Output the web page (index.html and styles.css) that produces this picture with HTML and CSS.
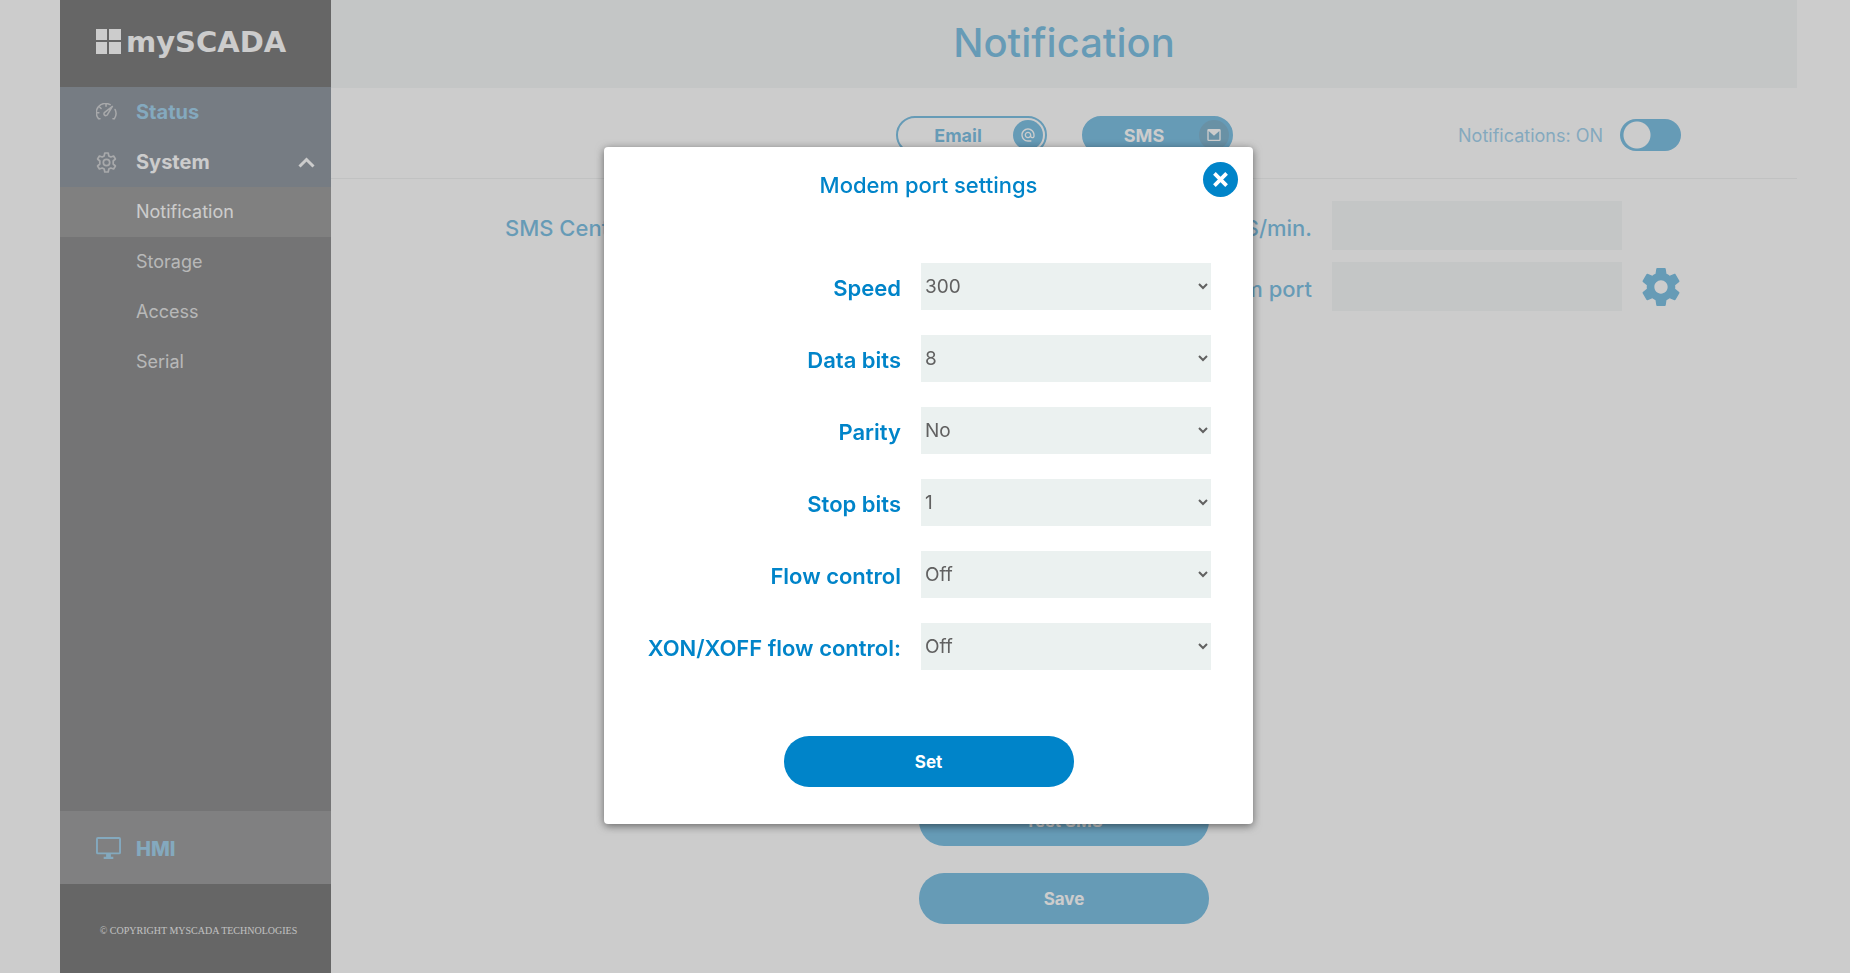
FILE: index.html
```html
<!DOCTYPE html>
<html lang="en">
<head>
  <meta charset="UTF-8">
  <title>mySCADA - Notification</title>
  <link rel="stylesheet" href="styles.css">
</head>
<body>

  <div class="page">

    <!-- Sidebar -->
    <aside class="sidebar">
      <a class="logo" href="#">
        <svg class="logo-mark" viewBox="0 0 25 25"><path d="M0 0h11v11H0zM13 0h12v11H13zM0 13h11v12H0zM13 13h12v12H13z"/></svg>
        <span>mySCADA</span>
      </a>

      <nav class="menu">
        <a class="menu-item status" href="#">
          <svg class="menu-icon line" viewBox="0 0 22 18" stroke-width="1.6" stroke-linecap="round">
            <path d="M4.200 16.400H2.700A9.600 9.600 0 0 1 14.800 1.800M17.800 16.400h1.500A9.600 9.600 0 0 0 20 6.800M10.500 1.400v2M4 4.400l1.300 1.300M1.400 10.200h1.600"/>
            <path d="M17.200 3.600l-8.100 6.200a1.900 1.900 0 1 0 2.700 2.600z" stroke-linejoin="round"/>
          </svg>
          <span>Status</span>
        </a>
        <a class="menu-item system" href="#">
          <svg class="menu-icon line" viewBox="0 0 21 21" stroke-width="1.7" stroke-linejoin="round">
            <path d="M8.800 1h3.400l.6 2.900 2 1.100 2.800-1 1.800 3-2.200 2v3l2.200 2-1.800 3-2.800-1-2 1.100-.6 2.900H8.800l-.6-2.900-2-1.100-2.800 1-1.800-3 2.200-2V9L1.600 7l1.800-3 2.800 1 2-1.100z"/>
            <circle cx="10.500" cy="10.500" r="3.200"/>
          </svg>
          <span>System</span>
          <svg class="chevron line" viewBox="0 0 17 11" stroke-width="3"><path d="M1.500 9.500l7-7 7 7"/></svg>
        </a>
        <a class="submenu-item active" href="#">Notification</a>
        <a class="submenu-item" href="#">Storage</a>
        <a class="submenu-item" href="#">Access</a>
        <a class="submenu-item" href="#">Serial</a>
      </nav>

      <a class="hmi" href="#">
        <svg class="hmi-icon" viewBox="0 0 26 24"><path fill-rule="evenodd" d="M2 0h22a2 2 0 0 1 2 2v14a2 2 0 0 1-2 2h-8.500v2.500H18V23H8v-2.500h2.500V18H2a2 2 0 0 1-2-2V2a2 2 0 0 1 2-2zm0 2v14h22V2z"/></svg>
        <span>HMI</span>
      </a>
      <footer class="copyright">© COPYRIGHT MYSCADA TECHNOLOGIES</footer>
    </aside>

    <!-- Content -->
    <main class="content">
      <header class="header">
        <h1>Notification</h1>
      </header>

      <div class="toolbar">
        <div class="tabs">
          <button class="tab" type="button">
            <span class="tab-text">Email</span>
            <span class="tab-icon">
              <svg viewBox="0 0 24 24"><path d="M12 2C6.480 2 2 6.480 2 12s4.480 10 10 10h5v-2h-5c-4.340 0-8-3.660-8-8s3.660-8 8-8 8 3.660 8 8v1.430c0 .79-.71 1.570-1.500 1.570s-1.500-.78-1.500-1.570V12c0-2.760-2.240-5-5-5s-5 2.240-5 5 2.240 5 5 5c1.380 0 2.640-.56 3.540-1.470.65.89 1.770 1.470 2.960 1.470 1.970 0 3.500-1.600 3.500-3.570V12c0-5.520-4.480-10-10-10zm0 13c-1.660 0-3-1.340-3-3s1.340-3 3-3 3 1.340 3 3-1.340 3-3 3z"/></svg>
            </span>
          </button>
          <button class="tab selected" type="button">
            <span class="tab-text">SMS</span>
            <span class="tab-icon">
              <svg viewBox="0 0 24 24"><path fill-rule="evenodd" d="M4 3h16a2 2 0 0 1 2 2v14a2 2 0 0 1-2 2H4a2 2 0 0 1-2-2V5a2 2 0 0 1 2-2zm0 3v13h16V6l-8 7z"/></svg>
            </span>
          </button>
        </div>
        <label class="toggle">
          <span>Notifications: ON</span>
          <input type="checkbox" checked>
        </label>
      </div>

      <form class="settings">
        <div class="settings-row">
          <div class="field">
            <label for="center">SMS Center number</label>
            <input id="center" type="text">
          </div>
          <div class="field">
            <label for="rate">SMS/min.</label>
            <input id="rate" type="text">
            <span class="field-end"></span>
          </div>
        </div>
        <div class="settings-row last">
          <div class="field">
            <label for="port">Modem port</label>
            <input id="port" type="text">
            <button class="field-end" type="button" aria-label="Modem port settings">
              <svg viewBox="2 2 20 20"><path d="M19.430 12.980c.04-.32.07-.64.07-.98s-.03-.66-.07-.98l2.110-1.650c.19-.15.24-.42.12-.64l-2-3.460c-.12-.22-.39-.3-.61-.22l-2.490 1c-.52-.4-1.080-.73-1.690-.98l-.38-2.650C14.460 2.180 14.250 2 14 2h-4c-.25 0-.46.18-.49.42l-.38 2.650c-.61.25-1.170.59-1.690.98l-2.490-1c-.23-.09-.49 0-.61.22l-2 3.460c-.13.22-.07.49.12.64l2.110 1.650c-.04.32-.07.65-.07.98s.03.66.07.98l-2.110 1.650c-.19.15-.24.42-.12.64l2 3.460c.12.22.39.3.61.22l2.490-1c.52.4 1.080.73 1.690.98l.38 2.650c.03.24.24.42.49.42h4c.25 0 .46-.18.49-.42l.38-2.650c.61-.25 1.170-.59 1.690-.98l2.490 1c.23.09.49 0 .61-.22l2-3.460c.12-.22.07-.49-.12-.64l-2.110-1.650zM12 15.500c-1.930 0-3.500-1.570-3.500-3.500s1.570-3.500 3.500-3.500 3.500 1.570 3.500 3.500-1.570 3.500-3.500 3.500z"/></svg>
            </button>
          </div>
        </div>
        <div class="actions">
          <button class="button" type="button">Test SMS</button>
          <button class="button" type="submit">Save</button>
        </div>
      </form>
    </main>

  </div>

  <!-- Modem port dialog -->
  <div class="overlay">
    <form class="modal" role="dialog" aria-labelledby="modal-title">
      <button class="close" type="button" aria-label="Close">
        <svg class="line" viewBox="0 0 16 16" stroke-width="4"><path d="M1.500 1.500l13 13M14.500 1.500l-13 13"/></svg>
      </button>
      <h2 id="modal-title">Modem port settings</h2>
      <div class="modal-fields">
        <label for="speed">Speed</label>
        <select id="speed"><option>300</option><option>9600</option></select>
        <label for="databits">Data bits</label>
        <select id="databits"><option>8</option><option>7</option></select>
        <label for="parity">Parity</label>
        <select id="parity"><option>No</option><option>Even</option><option>Odd</option></select>
        <label for="stopbits">Stop bits</label>
        <select id="stopbits"><option>1</option><option>2</option></select>
        <label for="flow">Flow control</label>
        <select id="flow"><option>Off</option><option>On</option></select>
        <label for="xon">XON/XOFF flow control:</label>
        <select id="xon"><option>Off</option><option>On</option></select>
      </div>
      <button class="button" type="submit">Set</button>
    </form>
  </div>

</body>
</html>
```
FILE: styles.css
```css
* {
  box-sizing: border-box;
}

body {
  margin: 0;
  background: #fff;
  color: #0084c9;
  font-family: Inter, "Open Sans", sans-serif;
}

h1, h2 {
  margin: 0;
  font-weight: 500;
}

a {
  color: inherit;
  text-decoration: none;
}

button, input, select {
  border: none;
  border-radius: 0;
  padding: 0;
  font-family: inherit;
}

svg {
  display: block;
  fill: currentColor;
}

svg.line {
  fill: none;
  stroke: currentColor;
}

.page {
  display: flex;
  min-height: 100vh;
  padding: 0 53px 0 60px;
}

/* Sidebar */
.sidebar {
  display: flex;
  flex-direction: column;
  flex: 0 0 271px;
  background: #232527;
}

.logo {
  display: flex;
  align-items: center;
  gap: 5px;
  height: 87px;
  padding: 0 0 4px 36px;
  background: #000;
  color: #fff;
  font: bold 29px "DejaVu Sans", sans-serif;
}

.logo-mark {
  width: 25px;
  height: 25px;
}

.menu {
  display: flex;
  flex-direction: column;
}

.menu-item {
  display: flex;
  align-items: center;
  gap: 19px;
  height: 50px;
  padding: 0 16px 0 36px;
  background: #2a374a;
  color: #fff;
  font-size: 20px;
  font-weight: 700;
}

.menu-item.status {
  color: #4ba7dc;
}

.menu-icon {
  width: 21px;
  color: #a5a9ac;
}

.chevron {
  width: 17px;
  margin-left: auto;
}

.submenu-item {
  height: 50px;
  padding-left: 76px;
  color: #cdcdcd;
  font-size: 18px;
  line-height: 50px;
}

.submenu-item.active {
  background: #414242;
  color: #fff;
}

.hmi {
  display: flex;
  align-items: center;
  gap: 15px;
  height: 73px;
  margin-top: auto;
  padding: 2px 0 0 36px;
  background: #414345;
  color: #4ba7dc;
  font-size: 20px;
  font-weight: 800;
}

.hmi-icon {
  width: 25px;
}

.copyright {
  height: 89px;
  padding: 2px 0 0 6px;
  background: #000;
  color: #e0e0e0;
  font: 10px/89px "Liberation Serif", serif;
  text-align: center;
}

/* Content */
.content {
  display: flex;
  flex-direction: column;
  flex: 1;
}

.header {
  height: 88px;
  background: #ebf1f0;
  text-align: center;
}

.header h1 {
  font-size: 40px;
  line-height: 86px;
}

.toolbar {
  display: grid;
  grid-template-columns: 1fr auto 1fr;
  align-items: center;
  height: 91px;
  padding: 4px 116px 0;
  border-bottom: 1px solid #e3e5e5;
}

.tabs {
  display: flex;
  grid-column: 2;
  gap: 35px;
}

.tab {
  display: flex;
  align-items: center;
  width: 151px;
  height: 38px;
  padding: 0 2px 0 6px;
  border: 2px solid #0084c9;
  border-radius: 19px;
  background: #fff;
  color: #0084c9;
  font-size: 18px;
  font-weight: 700;
}

.tab-text {
  flex: 1;
}

.tab-icon {
  display: grid;
  place-items: center;
  width: 30px;
  height: 30px;
  border-radius: 50%;
  background: #0084c9;
  color: #fff;
}

.tab-icon svg {
  width: 16px;
}

.tab.selected {
  background: #0084c9;
  color: #fff;
}

.tab.selected .tab-icon {
  background: #096b9f;
}

.toggle {
  display: flex;
  align-items: center;
  justify-self: end;
  gap: 17px;
  color: #4ba7dc;
  font-size: 18px;
}

.toggle input {
  appearance: none;
  width: 61px;
  height: 32px;
  margin: 0;
  border-radius: 16px;
  background: radial-gradient(circle at 17px 16px, #fff 13px, #0084c9 14px);
}

.settings {
  display: flex;
  flex-direction: column;
  flex: 1;
  padding: 22px 117px 49px 174px;
}

.settings-row {
  display: flex;
  justify-content: space-between;
  margin-bottom: 12px;
}

.settings-row.last {
  justify-content: flex-end;
}

.field {
  display: flex;
  align-items: center;
  font-size: 22px;
  font-weight: 500;
}

.field label {
  padding-top: 5px;
}

.field input {
  width: 290px;
  height: 49px;
  margin-left: 20px;
  background: #ebf1f0;
}

.field-end {
  width: 38px;
  margin-left: 20px;
  background: none;
  color: #0084c9;
}

.actions {
  display: flex;
  flex-direction: column;
  align-items: center;
  gap: 27px;
  margin-top: auto;
  /* evens out the wider left padding of the form */
  margin-right: 57px;
}

.button {
  width: 290px;
  height: 51px;
  border-radius: 25px;
  background: #0084c9;
  color: #fff;
  font-size: 17px;
  font-weight: 700;
}

/* Dialog */
.overlay {
  position: fixed;
  inset: 0;
  display: flex;
  align-items: center;
  justify-content: center;
  padding: 0 53px 2px 60px;
  background: rgba(170, 170, 170, 0.6);
}

.modal {
  position: relative;
  display: flex;
  flex-direction: column;
  align-items: center;
  width: 649px;
  padding: 23px 42px 37px;
  border-radius: 4px;
  background: #fff;
  box-shadow: 0 2px 8px rgba(0, 0, 0, 0.5);
}

.modal h2 {
  font-size: 22px;
  line-height: 30px;
}

.close {
  position: absolute;
  top: 15px;
  right: 15px;
  display: grid;
  place-items: center;
  width: 35px;
  height: 35px;
  border-radius: 50%;
  background: #0084c9;
  color: #fff;
}

.close svg {
  width: 15px;
}

.modal-fields {
  display: grid;
  grid-template-columns: 1fr 290px;
  align-items: center;
  gap: 25px 20px;
  width: 100%;
  margin: 63px 0 66px;
}

.modal-fields label {
  padding-top: 3px;
  font-size: 22px;
  font-weight: 600;
  text-align: right;
}

.modal-fields select {
  height: 47px;
  background-color: #ebf1f0;
  color: #616161;
  font-size: 19px;
}
```
